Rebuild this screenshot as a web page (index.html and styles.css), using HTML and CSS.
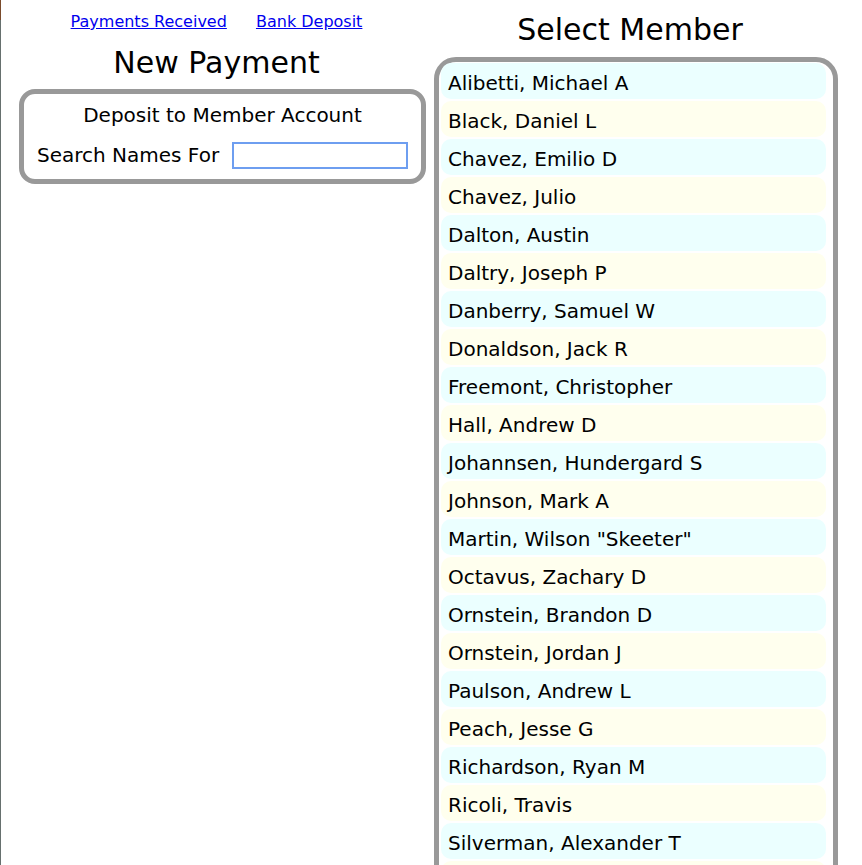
FILE: index.html
```html
<!DOCTYPE html>
<html>
<head>
  <title>New Payment</title>
  <link rel="stylesheet" href="styles.css">
</head>
<body>
  <div class="page">
    <div class="left">
      <div class="links">
        <a href="#">Payments Received</a>
        <a href="#">Bank Deposit</a>
      </div>
      <h1>New Payment</h1>
      <div class="box deposit">
        <div class="box-title">Deposit to Member Account</div>
        <div class="search-row">
          <label for="search">Search Names For</label>
          <input type="text" id="search" name="search">
        </div>
      </div>
    </div>
    <div class="right">
      <h1>Select Member</h1>
      <div class="box members">
        <div class="member">Alibetti, Michael A</div>
        <div class="member">Black, Daniel L</div>
        <div class="member">Chavez, Emilio D</div>
        <div class="member">Chavez, Julio</div>
        <div class="member">Dalton, Austin</div>
        <div class="member">Daltry, Joseph P</div>
        <div class="member">Danberry, Samuel W</div>
        <div class="member">Donaldson, Jack R</div>
        <div class="member">Freemont, Christopher</div>
        <div class="member">Hall, Andrew D</div>
        <div class="member">Johannsen, Hundergard S</div>
        <div class="member">Johnson, Mark A</div>
        <div class="member">Martin, Wilson "Skeeter"</div>
        <div class="member">Octavus, Zachary D</div>
        <div class="member">Ornstein, Brandon D</div>
        <div class="member">Ornstein, Jordan J</div>
        <div class="member">Paulson, Andrew L</div>
        <div class="member">Peach, Jesse G</div>
        <div class="member">Richardson, Ryan M</div>
        <div class="member">Ricoli, Travis</div>
        <div class="member">Silverman, Alexander T</div>
        <div class="member">Thompson, Kyle R</div>
        <div class="member">Wheeler, Grant E</div>
      </div>
    </div>
  </div>
</body>
</html>
```

FILE: styles.css
```css
html {
    background-color: #fff;
}
body {
    margin: 0;
    padding-left: 1px;
    font-family: "DejaVu Sans", Verdana, sans-serif;
    color: #000;
    background: linear-gradient(to bottom, #7a4b2c 0, #7a4b2c 20px, #66706e 20px) left top / 1px 100% no-repeat, #fff;
}
.page {
    display: flex;
    align-items: flex-start;
}
.left {
    width: 431px;
    text-align: center;
}
.links {
    padding-top: 12px;
    font-size: 16px;
}
.links a {
    color: #0000ee;
    margin: 0 12px;
}
h1 {
    font-size: 30px;
    font-weight: normal;
    margin: 0;
}
.left h1 {
    margin-top: 14px;
    margin-bottom: 8.5px;
}
.box {
    border: 5px solid #999;
    background-color: #fff;
}
.deposit {
    margin-left: 18px;
    margin-right: 6px;
    border-radius: 16px;
    padding: 10px 13px 10px;
    font-size: 20px;
}
.box-title {
    line-height: 23px;
    margin-bottom: 15px;
}
.search-row {
    display: flex;
    align-items: center;
    gap: 13px;
}
.search-row input {
    flex: 1;
    min-width: 0;
    height: 27px;
    box-sizing: border-box;
    border: 2px solid #6e9ef0;
    padding: 0 4px;
}
.right {
    width: 404px;
    margin-left: 2px;
}
.right h1 {
    text-align: center;
    padding-right: 12px;
    margin-top: 12px;
    margin-bottom: 10px;
}
.members {
    border-radius: 22px;
    padding: 1px 7px 0 2px;
}
.member {
    height: 32px;
    line-height: 32px;
    padding-top: 4px;
    margin-bottom: 2px;
    padding-left: 7px;
    font-size: 20px;
    border-radius: 10px;
    background-color: #ebffff;
}
.member:nth-child(even) {
    background-color: #ffffee;
}
```
